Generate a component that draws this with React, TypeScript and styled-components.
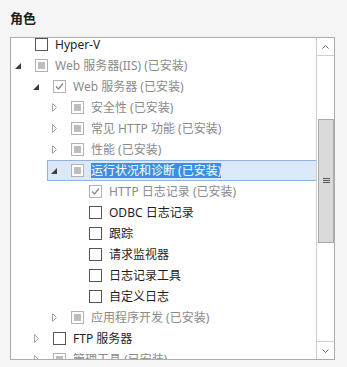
import React from "react";
import styled, { createGlobalStyle, css } from "styled-components";

type CheckState = "none" | "checked" | "partial";

interface Node {
  label: string;
  level: number;
  arrow?: "open" | "closed";
  check: CheckState;
  installed?: boolean;
  selected?: boolean;
}

const GlobalStyle = createGlobalStyle`
  body {
    margin: 0;
    background: #f5f5f5;
    font-family: "Noto Sans", "Noto Sans CJK SC", sans-serif;
    color: #1e1e1e;
  }
`;

const Page = styled.div`
  width: 347px;
  height: 367px;
  padding: 10px 0 0 10px;
  box-sizing: border-box;
  overflow: hidden;
`;

const Heading = styled.div`
  font-size: 13px;
  font-weight: bold;
  line-height: 17px;
  height: 17px;
  margin-bottom: 10px;
`;

const Panel = styled.div`
  width: 325px;
  height: 323px;
  box-sizing: border-box;
  border: 1px solid #acacac;
  background: #ffffff;
  display: flex;
  overflow: hidden;
`;

const TreeArea = styled.div`
  flex: 1;
  overflow: hidden;
`;

const TreeList = styled.div`
  margin-top: -4px;
  display: flex;
  flex-direction: column;
`;

const Row = styled.div<{ $level: number }>`
  height: 21px;
  display: flex;
  padding-left: ${(p) => p.$level * 18}px;
`;

const Item = styled.div<{ $selected?: boolean }>`
  flex: 1;
  display: flex;
  align-items: center;
  box-sizing: border-box;
  border: 1px solid transparent;
  border-right: none;
  ${(p) =>
    p.$selected &&
    css`
      background: #dae8f8;
      border-color: #8db2e3;
    `}
`;

const ArrowSlot = styled.span`
  width: 23px;
  padding-left: 3px;
  box-sizing: border-box;
  display: flex;
  align-items: center;
`;

const Box = styled.span<{ $disabled?: boolean }>`
  width: 13px;
  height: 13px;
  box-sizing: border-box;
  border: 1px solid ${(p) => (p.$disabled ? "#b2b2b2" : "#555555")};
  background: #ffffff;
  display: flex;
  align-items: center;
  justify-content: center;
  flex-shrink: 0;
`;

const PartialFill = styled.span`
  width: 7px;
  height: 7px;
  background: #bdbdbd;
`;

const Label = styled.span<{ $installed?: boolean; $selected?: boolean }>`
  margin-left: 7px;
  font-size: 12px;
  line-height: 15px;
  white-space: nowrap;
  color: ${(p) => (p.$installed ? "#8a8a8a" : "#1e1e1e")};
  ${(p) =>
    p.$selected &&
    css`
      background: #3a8fe0;
      color: #ffffff;
    `}
`;

const ScrollBar = styled.div`
  width: 17px;
  border-left: 1px solid #cfcfcf;
  display: flex;
  flex-direction: column;
  background: #ffffff;
`;

const ScrollButton = styled.div<{ $bottom?: boolean }>`
  height: 17px;
  flex-shrink: 0;
  display: flex;
  align-items: center;
  justify-content: center;
  ${(p) =>
    p.$bottom ? "border-top: 1px solid #cfcfcf;" : "border-bottom: 1px solid #cfcfcf;"}
`;

const Track = styled.div`
  flex: 1;
  display: flex;
  flex-direction: column;
`;

const Thumb = styled.div`
  height: 124px;
  margin: 0 0 0 1px;
  box-sizing: border-box;
  border: 1px solid #ababab;
  background: #dadada;
  display: flex;
  align-items: center;
  justify-content: center;
`;

function Arrow({ kind }: { kind?: "open" | "closed" }) {
  if (kind === "open") {
    return (
      <svg width="6" height="6" viewBox="0 0 6 6">
        <polygon points="6,0 6,6 0,6" fill="#3c3c3c" />
      </svg>
    );
  }
  if (kind === "closed") {
    return (
      <svg width="6" height="9" viewBox="0 0 6 9" style={{ marginLeft: 1 }}>
        <polygon points="0.5,0.5 4.5,4.5 0.5,8.5" fill="none" stroke="#a8a8a8" />
      </svg>
    );
  }
  return null;
}

function CheckBox({ state, disabled }: { state: CheckState; disabled?: boolean }) {
  return (
    <Box $disabled={disabled}>
      {state === "partial" && <PartialFill />}
      {state === "checked" && (
        <svg width="11" height="11" viewBox="0 0 11 11">
          <path d="M2 5.5 L4.5 8 L9 2.5" fill="none" stroke="#8a8a8a" strokeWidth="1.4" />
        </svg>
      )}
    </Box>
  );
}

const nodes: Node[] = [
  { label: "Hyper-V", level: 0, check: "none" },
  { label: "Web 服务器(IIS) (已安装)", level: 0, arrow: "open", check: "partial", installed: true },
  { label: "Web 服务器 (已安装)", level: 1, arrow: "open", check: "checked", installed: true },
  { label: "安全性 (已安装)", level: 2, arrow: "closed", check: "partial", installed: true },
  { label: "常见 HTTP 功能 (已安装)", level: 2, arrow: "closed", check: "partial", installed: true },
  { label: "性能 (已安装)", level: 2, arrow: "closed", check: "partial", installed: true },
  { label: "运行状况和诊断 (已安装)", level: 2, arrow: "open", check: "partial", installed: true, selected: true },
  { label: "HTTP 日志记录 (已安装)", level: 3, check: "checked", installed: true },
  { label: "ODBC 日志记录", level: 3, check: "none" },
  { label: "跟踪", level: 3, check: "none" },
  { label: "请求监视器", level: 3, check: "none" },
  { label: "日志记录工具", level: 3, check: "none" },
  { label: "自定义日志", level: 3, check: "none" },
  { label: "应用程序开发 (已安装)", level: 2, arrow: "closed", check: "partial", installed: true },
  { label: "FTP 服务器", level: 1, arrow: "closed", check: "none" },
  { label: "管理工具 (已安装)", level: 1, arrow: "closed", check: "partial", installed: true },
];

export default function App() {
  const thumbTop = 63;

  return (
    <Page>
      <GlobalStyle />
      <Heading>角色</Heading>
      <Panel>
        <TreeArea>
          <TreeList>
            {nodes.map((n, i) => (
              <Row key={i} $level={n.level}>
                <Item $selected={n.selected}>
                  <ArrowSlot>
                    <Arrow kind={n.arrow} />
                  </ArrowSlot>
                  <CheckBox state={n.check} disabled={n.installed} />
                  <Label $installed={n.installed} $selected={n.selected}>
                    {n.label}
                  </Label>
                </Item>
              </Row>
            ))}
          </TreeList>
        </TreeArea>
        <ScrollBar>
          <ScrollButton>
            <svg width="7" height="4" viewBox="0 0 7 4">
              <path d="M0.5 3.5 L3.5 0.5 L6.5 3.5" fill="none" stroke="#606060" />
            </svg>
          </ScrollButton>
          <Track>
            <Thumb style={{ marginTop: thumbTop }}>
              <svg width="7" height="6" viewBox="0 0 7 6">
                <path d="M0 0.5 H7 M0 2.5 H7 M0 4.5 H7" stroke="#555555" />
              </svg>
            </Thumb>
          </Track>
          <ScrollButton $bottom>
            <svg width="7" height="4" viewBox="0 0 7 4">
              <path d="M0.5 0.5 L3.5 3.5 L6.5 0.5" fill="none" stroke="#606060" />
            </svg>
          </ScrollButton>
        </ScrollBar>
      </Panel>
    </Page>
  );
}
